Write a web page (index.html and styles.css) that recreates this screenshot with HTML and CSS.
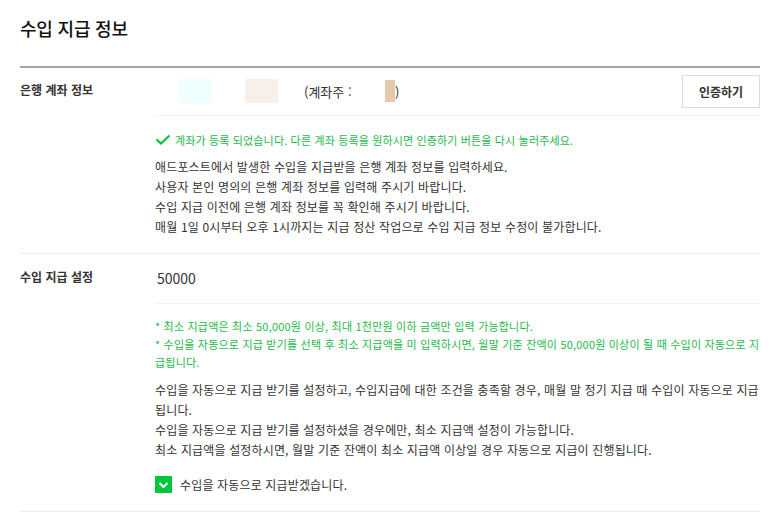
FILE: index.html
```html
<!DOCTYPE html>
<html lang="ko">
<head>
<meta charset="utf-8">
<title>수입 지급 정보</title>
<link rel="stylesheet" href="styles.css">
</head>
<body>
<div class="page">
  <h1 class="title">수입 지급 정보</h1>
  <div class="sections">
    <div class="row">
      <div class="label label-bank">은행 계좌 정보</div>
      <div class="content">
        <div class="account">
          <span class="mask mask-bank"></span>
          <span class="mask mask-num"></span>
          <span class="owner">(계좌주 :</span>
          <span class="mask mask-owner"></span><span class="paren">)</span>
          <button class="btn">인증하기</button>
        </div>
        <div class="notice-block">
          <p class="notice">
            <svg class="ok-icon" width="16" height="12" viewBox="0 0 16 12"><polyline points="1.5,5.5 6,9.5 14.5,1.5" fill="none" stroke="#00c73c" stroke-width="2.2"/></svg>
            계좌가 등록 되었습니다. 다른 계좌 등록을 원하시면 인증하기 버튼을 다시 눌러주세요.
          </p>
          <div class="desc">
            <p>애드포스트에서 발생한 수입을 지급받을 은행 계좌 정보를 입력하세요.</p>
            <p>사용자 본인 명의의 은행 계좌 정보를 입력해 주시기 바랍니다.</p>
            <p>수입 지급 이전에 은행 계좌 정보를 꼭 확인해 주시기 바랍니다.</p>
            <p>매월 1일 0시부터 오후 1시까지는 지급 정산 작업으로 수입 지급 정보 수정이 불가합니다.</p>
          </div>
        </div>
      </div>
    </div>
    <div class="row">
      <div class="label label-pay">수입 지급 설정</div>
      <div class="content">
        <div class="amount">50000</div>
        <div class="pay-block">
          <div class="green-notes">
            <p>* 최소 지급액은 최소 50,000원 이상, 최대 1천만원 이하 금액만 입력 가능합니다.</p>
            <p>* 수입을 자동으로 지급 받기를 선택 후 최소 지급액을 미 입력하시면, 월말 기준 잔액이 50,000원 이상이 될 때 수입이 자동으로 지급됩니다.</p>
          </div>
          <div class="desc desc-pay">
            <p>수입을 자동으로 지급 받기를 설정하고, 수입지급에 대한 조건을 충족할 경우, 매월 말 정기 지급 때 수입이 자동으로 지급됩니다.</p>
            <p>수입을 자동으로 지급 받기를 설정하셨을 경우에만, 최소 지급액 설정이 가능합니다.</p>
            <p>최소 지급액을 설정하시면, 월말 기준 잔액이 최소 지급액 이상일 경우 자동으로 지급이 진행됩니다.</p>
          </div>
          <label class="check-row">
            <span class="checkbox"><svg width="17" height="17" viewBox="0 0 17 17"><polyline points="4.5,7 8.5,11 12.5,7" fill="none" stroke="#fff" stroke-width="2"/></svg></span>
            <span class="check-text">수입을 자동으로 지급받겠습니다.</span>
          </label>
        </div>
      </div>
    </div>
  </div>
</div>
</body>
</html>
```
FILE: styles.css
```css
* { box-sizing: border-box; }
body {
  margin: 0;
  background: #fff;
  font-family: "Noto Sans CJK KR", "Noto Sans", sans-serif;
  color: #333;
}
p { margin: 0; }
.page {
  width: 740px;
  margin-left: 20px;
}
.title {
  margin: 0;
  padding-top: 16px;
  height: 66px;
  font-size: 18px;
  line-height: 24px;
  font-weight: 500;
  letter-spacing: -0.2px;
  color: #111;
}
.sections {
  border-top: 2px solid #a6a6a6;
}
.row {
  display: flex;
  border-bottom: 1px solid #eeeeee;
}
.label {
  width: 135px;
  flex: none;
  font-size: 12px;
  font-weight: 700;
  line-height: 18px;
  letter-spacing: 0;
  color: #333;
}
.label-bank { padding-top: 13px; }
.label-pay { padding-top: 14px; }
.content {
  flex: 1;
  min-width: 0;
}
.account {
  display: flex;
  align-items: center;
  height: 48px;
  padding-top: 7px;
  padding-bottom: 8px;
  border-bottom: 1px solid #f3f3f3;
}
.mask { display: block; }
.mask-bank {
  width: 33px; height: 24px;
  margin-left: 24px;
  background: #effefe;
}
.mask-num {
  width: 33px; height: 24px;
  margin-left: 33px;
  background: #f7efe9;
}
.owner {
  margin-left: 26px;
  font-size: 13px;
  letter-spacing: 0;
  color: #333;
  width: 81px;
}
.mask-owner {
  width: 10px; height: 22px;
  background: #e2c9ab;
}
.paren {
  font-size: 13px;
  color: #333;
}
.btn {
  margin-left: auto;
  width: 78px;
  height: 33px;
  border: 1px solid #dddddd;
  background: #fff;
  font-family: inherit;
  font-size: 12px;
  font-weight: 700;
  letter-spacing: 0;
  color: #333;
  padding: 0;
}
.notice-block {
  padding-top: 15px;
  padding-bottom: 16px;
}
.notice {
  display: flex;
  align-items: center;
  font-size: 11px;
  line-height: 18px;
  letter-spacing: 0.15px;
  color: #27b84c;
}
.ok-icon {
  margin-right: 4px;
  flex: none;
}
.desc {
  margin-top: 8px;
  font-size: 12px;
  line-height: 20px;
  letter-spacing: 0.15px;
  color: #333;
}
.amount {
  height: 50px;
  padding: 14px 0 15px 2px;
  font-size: 14px;
  line-height: 20px;
  color: #333;
  border-bottom: 1px solid #f3f3f3;
}
.pay-block {
  padding-top: 13px;
  padding-bottom: 17px;
}
.green-notes {
  font-size: 11px;
  line-height: 18px;
  letter-spacing: 0.2px;
  color: #27b84c;
}
.desc-pay {
  margin-top: 9px;
}
.check-row {
  display: flex;
  align-items: center;
  margin-top: 14px;
  height: 20px;
}
.checkbox {
  width: 17px;
  height: 17px;
  background: #00c73c;
  display: block;
  margin-left: 0;
}
.checkbox svg { display: block; }
.check-text {
  margin-left: 8px;
  font-size: 12px;
  letter-spacing: 0.15px;
  color: #333;
}
```
